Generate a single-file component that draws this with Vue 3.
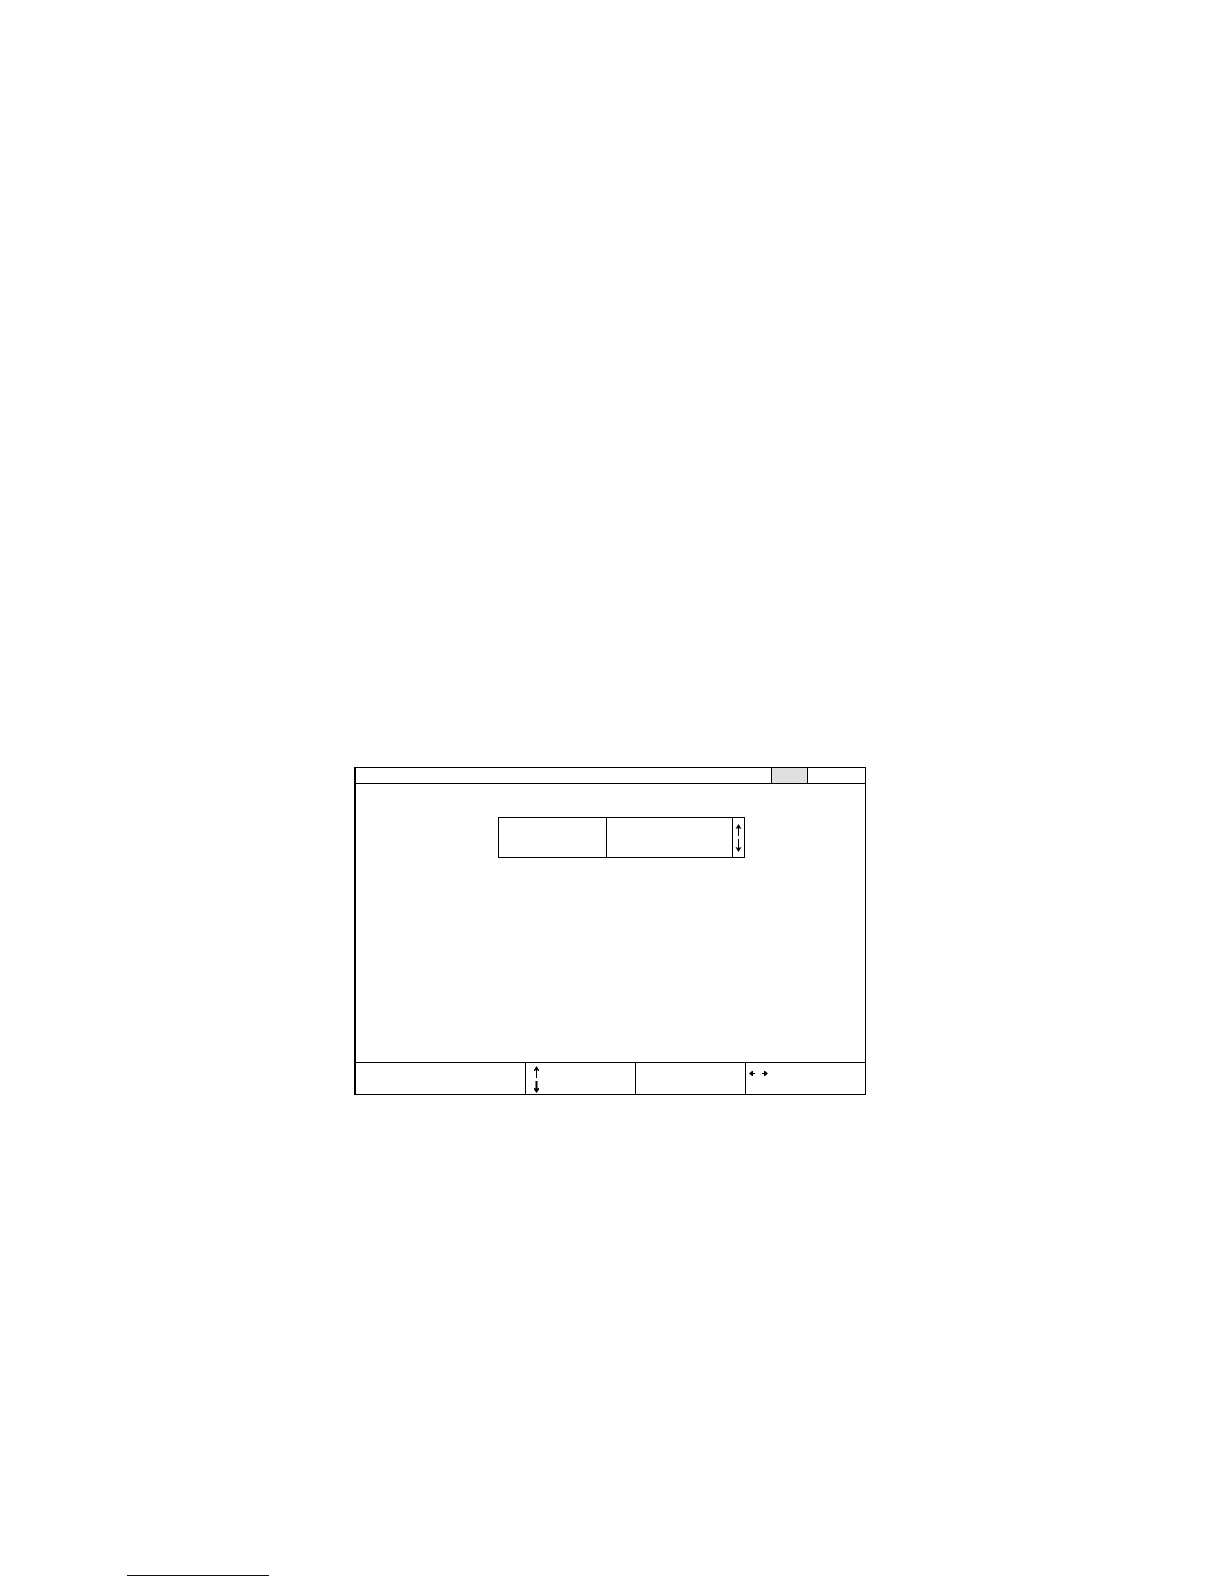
<template>
  <main class="page">
    <section class="panel">
      <header class="title-bar">
        <div></div>
        <div class="cell active"></div>
        <div class="cell"></div>
      </header>

      <div class="panel-body">
        <div class="selector">
          <div></div>
          <div class="cell"></div>
          <div class="cell arrows">
            <button type="button" class="arrow-btn" aria-label="Up">
              <svg width="7" height="12" viewBox="0 0 7 12">
                <path d="M3.5 0L6.5 5L3.5 4L0.5 5Z" />
                <path d="M3 3H4V12H3Z" />
              </svg>
            </button>
            <button type="button" class="arrow-btn" aria-label="Down">
              <svg width="7" height="13" viewBox="0 0 7 13">
                <path d="M3 0H4V9H3Z" />
                <path d="M3.5 13L0.5 8L3.5 9L6.5 8Z" />
              </svg>
            </button>
          </div>
        </div>
      </div>

      <footer class="key-bar">
        <div></div>
        <div class="cell vertical">
          <svg width="7" height="12" viewBox="0 0 7 12">
            <path d="M3.5 0L6 4V5H5L3.5 3L2 5H1V4Z" />
            <path d="M3 1H4V12H3Z" />
          </svg>
          <svg width="7" height="12" viewBox="0 0 7 12">
            <path d="M2.5 0H4.5V9H2.5Z" />
            <path d="M3.5 12L1 8.5V7H2L3.5 8L5 7H6V8.5Z" />
          </svg>
        </div>
        <div class="cell"></div>
        <div class="cell horizontal">
          <svg width="6" height="5" viewBox="0 0 6 5">
            <path d="M0 2.5L3 0H4V5H3Z" />
            <path d="M2 2H6V3H2Z" />
          </svg>
          <svg width="6" height="5" viewBox="0 0 6 5">
            <path d="M6 2.5L3 0H2V5H3Z" />
            <path d="M0 2H4V3H0Z" />
          </svg>
        </div>
      </footer>
    </section>

    <a href="#" class="page-link"></a>
  </main>
</template>

<script setup>
</script>

<style>
body {
  margin: 0;
  background: #fff;
}
</style>

<style scoped>
.page {
  display: flex;
  flex-direction: column;
  gap: 464px;
  padding: 767px 127px 8px;
  font-family: "Liberation Sans", Arial, sans-serif;
}

.panel {
  margin: 0 231px 0 227px;
  border: 1px solid #000;
  border-left-width: 2px;
}

.cell { border-left: 1px solid #000; }
.active { background: #e0e0e0; }

.title-bar {
  display: grid;
  grid-template-columns: 1fr 36px 58px;
  height: 15px;
  border-bottom: 1px solid #000;
}

.panel-body {
  padding: 33px 120px 204px 142px;
}

.selector {
  display: grid;
  grid-template-columns: 107fr 126fr 12px;
  height: 39px;
  border: 1px solid #000;
}

.arrows {
  display: flex;
  flex-direction: column;
  align-items: center;
  gap: 3px;
  padding-top: 6px;
}

.arrow-btn {
  display: block;
  padding: 0;
  border: none;
  background: none;
  cursor: pointer;
}

svg {
  display: block;
  fill: #000;
}

.key-bar {
  display: grid;
  grid-template-columns: 169fr 110fr 110fr 120fr;
  height: 31px;
  border-top: 1px solid #000;
}

.vertical {
  display: flex;
  flex-direction: column;
  gap: 3px;
  padding: 3px 7px 0;
}

.horizontal {
  display: flex;
  gap: 7px;
  padding: 8px 3px 0;
}

.page-link {
  width: 142px;
  height: 16px;
  border-bottom: 1px solid #000090;
}
</style>
